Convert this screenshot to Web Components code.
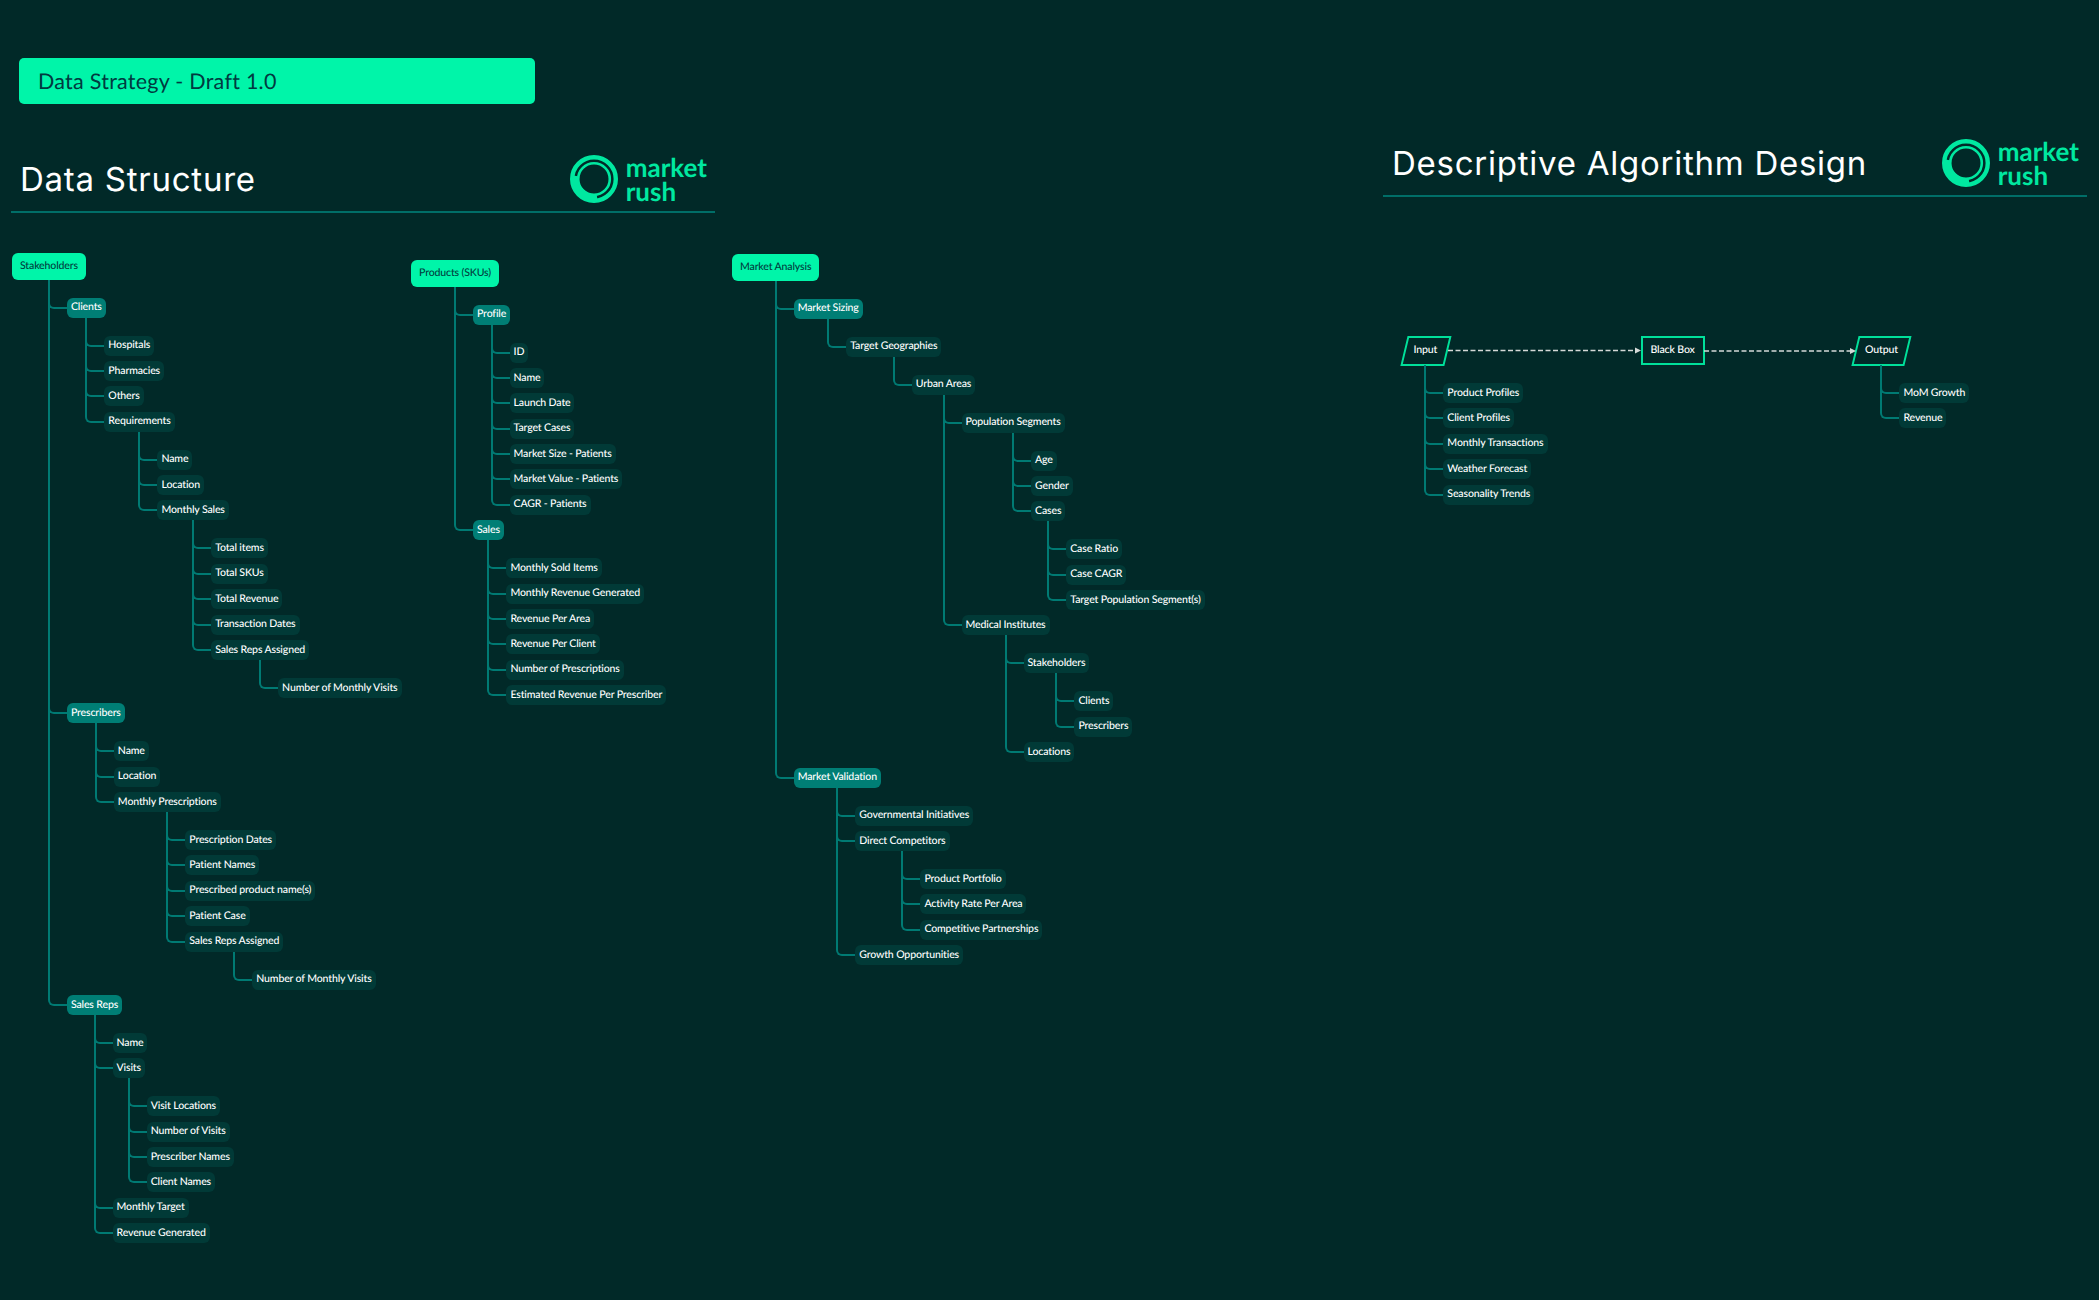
<!doctype html>
<html>
<head>
<meta charset="utf-8">
<title>Data Strategy</title>
<style>
  html, body { margin: 0; background: #012928; }
  body { width: 2099px; height: 1300px; overflow: hidden; font-family: "Lato", "Noto Sans", sans-serif; text-rendering: geometricPrecision; }
  #page { display: grid; grid-template-columns: 1372px 727px; }
  #left { padding-top: 58px; }
  #left section-head { margin-top: 43.5px; }
  #right { padding-top: 131px; }
  #maps { display: flex; align-items: flex-start; margin-top: 39.5px; padding-left: 12px; }
  #maps > .t1 { width: 399px; }
  #maps > .t2 { width: 321px; margin-top: 7px; }
  #maps > .t3 { margin-top: 1px; }
</style>
</head>
<body>
<div id="page">
  <div id="left">
    <draft-banner>Data Strategy - Draft 1.0</draft-banner>
    <section-head>Data Structure</section-head>
    <div id="maps">
      <div class="t1">
        <tree-node label="Stakeholders" kind="root">
          <tree-node label="Clients" kind="sub">
            <tree-node label="Hospitals"></tree-node>
            <tree-node label="Pharmacies"></tree-node>
            <tree-node label="Others"></tree-node>
            <tree-node label="Requirements">
              <tree-node label="Name"></tree-node>
              <tree-node label="Location"></tree-node>
              <tree-node label="Monthly Sales">
                <tree-node label="Total items"></tree-node>
                <tree-node label="Total SKUs"></tree-node>
                <tree-node label="Total Revenue"></tree-node>
                <tree-node label="Transaction Dates"></tree-node>
                <tree-node label="Sales Reps Assigned">
                  <tree-node label="Number of Monthly Visits"></tree-node>
                </tree-node>
              </tree-node>
            </tree-node>
          </tree-node>
          <tree-node label="Prescribers" kind="sub">
            <tree-node label="Name"></tree-node>
            <tree-node label="Location"></tree-node>
            <tree-node label="Monthly Prescriptions">
              <tree-node label="Prescription Dates"></tree-node>
              <tree-node label="Patient Names"></tree-node>
              <tree-node label="Prescribed product name(s)"></tree-node>
              <tree-node label="Patient Case"></tree-node>
              <tree-node label="Sales Reps Assigned">
                <tree-node label="Number of Monthly Visits"></tree-node>
              </tree-node>
            </tree-node>
          </tree-node>
          <tree-node label="Sales Reps" kind="sub">
            <tree-node label="Name"></tree-node>
            <tree-node label="Visits">
              <tree-node label="Visit Locations"></tree-node>
              <tree-node label="Number of Visits"></tree-node>
              <tree-node label="Prescriber Names"></tree-node>
              <tree-node label="Client Names"></tree-node>
            </tree-node>
            <tree-node label="Monthly Target"></tree-node>
            <tree-node label="Revenue Generated"></tree-node>
          </tree-node>
        </tree-node>
      </div>
      <div class="t2">
        <tree-node label="Products (SKUs)" kind="root">
          <tree-node label="Profile" kind="sub">
            <tree-node label="ID"></tree-node>
            <tree-node label="Name"></tree-node>
            <tree-node label="Launch Date"></tree-node>
            <tree-node label="Target Cases"></tree-node>
            <tree-node label="Market Size - Patients"></tree-node>
            <tree-node label="Market Value - Patients"></tree-node>
            <tree-node label="CAGR - Patients"></tree-node>
          </tree-node>
          <tree-node label="Sales" kind="sub">
            <tree-node label="Monthly Sold Items"></tree-node>
            <tree-node label="Monthly Revenue Generated"></tree-node>
            <tree-node label="Revenue Per Area"></tree-node>
            <tree-node label="Revenue Per Client"></tree-node>
            <tree-node label="Number of Prescriptions"></tree-node>
            <tree-node label="Estimated Revenue Per Prescriber"></tree-node>
          </tree-node>
        </tree-node>
      </div>
      <div class="t3">
        <tree-node label="Market Analysis" kind="root">
          <tree-node label="Market Sizing" kind="sub">
            <tree-node label="Target Geographies">
              <tree-node label="Urban Areas">
                <tree-node label="Population Segments">
                  <tree-node label="Age"></tree-node>
                  <tree-node label="Gender"></tree-node>
                  <tree-node label="Cases">
                    <tree-node label="Case Ratio"></tree-node>
                    <tree-node label="Case CAGR"></tree-node>
                    <tree-node label="Target Population Segment(s)"></tree-node>
                  </tree-node>
                </tree-node>
                <tree-node label="Medical Institutes">
                  <tree-node label="Stakeholders">
                    <tree-node label="Clients"></tree-node>
                    <tree-node label="Prescribers"></tree-node>
                  </tree-node>
                  <tree-node label="Locations"></tree-node>
                </tree-node>
              </tree-node>
            </tree-node>
          </tree-node>
          <tree-node label="Market Validation" kind="sub">
            <tree-node label="Governmental Initiatives"></tree-node>
            <tree-node label="Direct Competitors">
              <tree-node label="Product Portfolio"></tree-node>
              <tree-node label="Activity Rate Per Area"></tree-node>
              <tree-node label="Competitive Partnerships"></tree-node>
            </tree-node>
            <tree-node label="Growth Opportunities"></tree-node>
          </tree-node>
        </tree-node>
      </div>
    </div>
  </div>
  <div id="right">
    <section-head>Descriptive Algorithm Design</section-head>
    <flow-diagram>
      <tree-node label="Input" kind="para">
        <tree-node label="Product Profiles"></tree-node>
        <tree-node label="Client Profiles"></tree-node>
        <tree-node label="Monthly Transactions"></tree-node>
        <tree-node label="Weather Forecast"></tree-node>
        <tree-node label="Seasonality Trends"></tree-node>
      </tree-node>
      <tree-node label="Black Box" kind="box"></tree-node>
      <tree-node label="Output" kind="para">
        <tree-node label="MoM Growth"></tree-node>
        <tree-node label="Revenue"></tree-node>
      </tree-node>
    </flow-diagram>
  </div>
</div>

<script>
// one box of a mind map, children go in the slot
const nodeTemplate = document.createElement('template')
nodeTemplate.innerHTML = `
  <style>
    :host {
      display: block; position: relative;
      --gap: 5.38px; --mid: 10px; --line: #007a73;
      margin-top: var(--gap);
    }
    :host(:first-child) { --gap: 18px; }
    :host([kind]:not([kind="sub"])) { margin-top: 0; }
    :host::before {
      content: ""; position: absolute; box-sizing: border-box;
      left: -19px; width: 19px;
      top: calc(var(--gap) * -1); height: calc(var(--gap) + var(--mid) + 1px);
      border-left: 2px solid var(--line); border-bottom: 2px solid var(--line);
      border-bottom-left-radius: 6px;
    }
    :host::after {
      content: ""; position: absolute;
      left: -19px; top: 0; bottom: 0;
      border-left: 2px solid var(--line);
    }
    :host(:last-child)::after { display: none; }
    :host([kind="root"])::before, :host([kind="root"])::after,
    :host([kind="para"])::before, :host([kind="para"])::after,
    :host([kind="box"])::before, :host([kind="box"])::after { display: none; }

    .head {
      position: relative; box-sizing: border-box;
      display: flex; align-items: center; width: fit-content;
      height: 20px; padding: 0 4px; border-radius: 6px;
      background: #013a37; color: #fff;
      font: 500 10.55px/1 "Lato", "Noto Sans", sans-serif; letter-spacing: -.15px; white-space: nowrap;
    }
    :host([kind="sub"]) .head { background: #007e75; }
    :host([kind="root"]) .head { height: 27px; padding: 0 8px; background: #00f5a9; color: #01403f; }
    :host([kind="para"]) .head, :host([kind="box"]) .head {
      height: 29.5px; padding: 0 10px; background: none;
    }
    :host([kind="box"]) .head { border: 2px solid #00e09a; border-radius: 0; padding: 0 8px; }
    :host([kind="para"]) .head::before {
      content: ""; position: absolute; inset: 0;
      border: 2px solid #00e09a; transform: skewX(-13.5deg);
    }
    .kids { position: relative; }
  </style>
  <div class="head"><span id="text"></span></div>
  <div class="kids"><slot></slot></div>
`

class TreeNode extends HTMLElement {
  constructor() {
    super()
    this.attachShadow({mode: 'open'}).appendChild(nodeTemplate.content.cloneNode(true))
  }

  connectedCallback() {
    const head = this.shadowRoot.querySelector('.head')
    this.shadowRoot.querySelector('#text').textContent = this.getAttribute('label')
    // children hang 18px right of the middle of this box
    this.shadowRoot.querySelector('.kids').style.marginLeft = `${head.getBoundingClientRect().width / 2 + 18}px`
  }
}
customElements.define('tree-node', TreeNode)

const bannerTemplate = document.createElement('template')
bannerTemplate.innerHTML = `
  <style>
    :host {
      display: flex; align-items: center; box-sizing: border-box;
      margin-left: 19px; width: 516px; height: 45.5px; padding-left: 19px;
      background: #00f5a9; border-radius: 5px; color: #013a40;
      font: 400 21.5px "Lato", "Noto Sans", sans-serif; letter-spacing: .25px;
    }
  </style>
  <slot></slot>
`
class DraftBanner extends HTMLElement {
  constructor() {
    super()
    this.attachShadow({mode: 'open'}).appendChild(bannerTemplate.content.cloneNode(true))
  }
}
customElements.define('draft-banner', DraftBanner)

const logoTemplate = document.createElement('template')
logoTemplate.innerHTML = `
  <style>
    :host { display: flex; align-items: center; gap: 8px; color: #00e8a0; }
    svg { width: 48px; height: 48px; display: block; }
    .word { margin-top: -1px; font: 700 26px/24px "Lato", "Noto Sans", sans-serif; }
  </style>
  <svg viewBox="0 0 48 48" fill="none" stroke="currentColor">
    <circle cx="24" cy="24" r="21.8" stroke-width="4.4"/>
    <circle cx="24" cy="24" r="15.8" stroke-width="2.6"/>
    <path d="M6.3 20.9 A18 18 0 0 0 27 41.75" stroke-width="6"/>
  </svg>
  <div class="word">market<br>rush</div>
`
class RushLogo extends HTMLElement {
  constructor() {
    super()
    this.attachShadow({mode: 'open'}).appendChild(logoTemplate.content.cloneNode(true))
  }
}
customElements.define('rush-logo', RushLogo)

const headTemplate = document.createElement('template')
headTemplate.innerHTML = `
  <style>
    :host {
      display: flex; align-items: center; justify-content: space-between; box-sizing: border-box;
      margin-left: 11px; width: 704px; height: 66px; padding: 0 8px 0 9px;
      border-bottom: 2px solid #006e68; color: #fff;
    }
    .title { font: 400 33px "Inter", "Liberation Sans", sans-serif; letter-spacing: .75px; }
  </style>
  <div class="title"><slot></slot></div>
  <rush-logo></rush-logo>
`
class SectionHead extends HTMLElement {
  constructor() {
    super()
    this.attachShadow({mode: 'open'}).appendChild(headTemplate.content.cloneNode(true))
  }
}
customElements.define('section-head', SectionHead)

const flowTemplate = document.createElement('template')
flowTemplate.innerHTML = `
  <style>
    :host {
      display: grid; position: relative;
      grid-template-columns: 237px 214.5px auto; margin: 138.5px 0 0 31.5px;
    }
    svg { position: absolute; left: 0; top: 0; width: 520px; height: 30px; overflow: visible; }
  </style>
  <slot></slot>
  <svg viewBox="0 0 520 30" fill="none">
    <path d="M44 14.5 H232" stroke="#d5d9d7" stroke-width="1.6" stroke-dasharray="5 2.5"/>
    <path d="M231 11.5 L237 14.5 L231 17.5 Z" fill="#d5d9d7"/>
    <path d="M300 15 H447" stroke="#d5d9d7" stroke-width="1.6" stroke-dasharray="5 2.5"/>
    <path d="M446 12 L452 15 L446 18 Z" fill="#d5d9d7"/>
  </svg>
`
class FlowDiagram extends HTMLElement {
  constructor() {
    super()
    this.attachShadow({mode: 'open'}).appendChild(flowTemplate.content.cloneNode(true))
  }
}
customElements.define('flow-diagram', FlowDiagram)
</script>
</body>
</html>
